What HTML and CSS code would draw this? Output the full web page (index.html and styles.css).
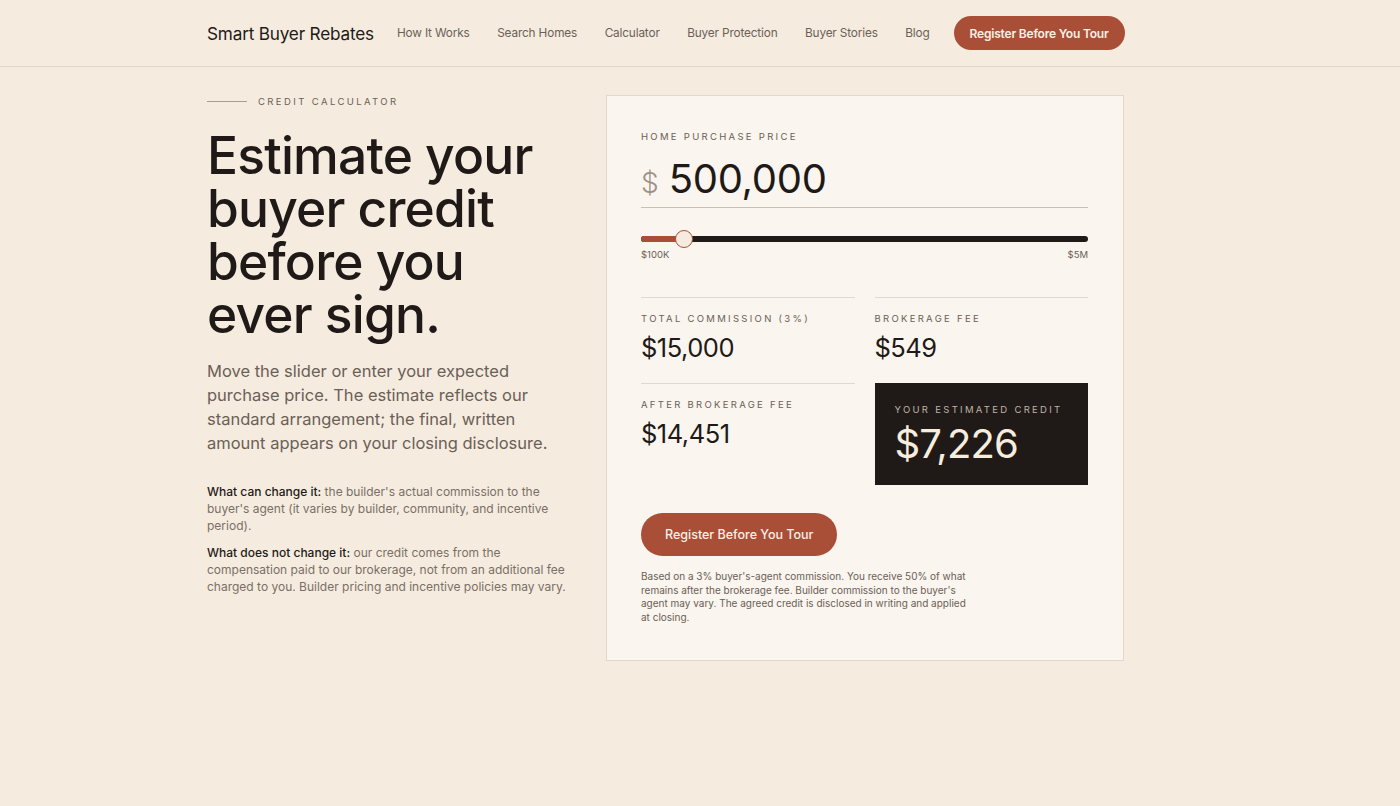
FILE: index.html
```html
<!DOCTYPE html>
<html lang="en">
<head>
<meta charset="utf-8">
<title>Credit Calculator · Smart Buyer Rebates</title>
<link rel="stylesheet" href="styles.css">
</head>
<body>
<header class="site-header">
  <div class="wrap header-row">
    <a class="logo" href="#">Smart Buyer Rebates</a>
    <nav class="nav">
      <a href="#">How It Works</a>
      <a href="#">Search Homes</a>
      <a href="#">Calculator</a>
      <a href="#">Buyer Protection</a>
      <a href="#">Buyer Stories</a>
      <a href="#">Blog</a>
    </nav>
    <a class="btn btn-sm" href="#">Register Before You Tour</a>
  </div>
</header>

<main class="wrap main-row">
  <section class="intro">
    <div class="eyebrow"><span class="eyebrow-line"></span>Credit Calculator</div>
    <h1 class="headline">Estimate your buyer credit before you ever sign.</h1>
    <p class="lead">Move the slider or enter your expected purchase price. The estimate reflects our standard arrangement; the final, written amount appears on your closing disclosure.</p>
    <p class="note"><strong>What can change it:</strong> the builder's actual commission to the buyer's agent (it varies by builder, community, and incentive period).</p>
    <p class="note"><strong>What does not change it:</strong> our credit comes from the compensation paid to our brokerage, not from an additional fee charged to you. Builder pricing and incentive policies may vary.</p>
  </section>

  <section class="card">
    <div class="label">Home Purchase Price</div>
    <div class="price-field">
      <span class="currency">$</span>
      <span class="price">500,000</span>
    </div>
    <div class="slider">
      <div class="track">
        <div class="fill" style="width: 9.6%"></div>
        <div class="thumb" style="left: 9.6%"></div>
      </div>
      <div class="slider-labels"><span>$100K</span><span>$5M</span></div>
    </div>

    <div class="stats">
      <div class="stat">
        <div class="label">Total Commission (3%)</div>
        <div class="stat-value">$15,000</div>
      </div>
      <div class="stat">
        <div class="label">Brokerage Fee</div>
        <div class="stat-value">$549</div>
      </div>
      <div class="stat">
        <div class="label">After Brokerage Fee</div>
        <div class="stat-value">$14,451</div>
      </div>
      <div class="stat stat-credit">
        <div class="label">Your Estimated Credit</div>
        <div class="credit-value">$7,226</div>
      </div>
    </div>

    <a class="btn btn-lg" href="#">Register Before You Tour</a>
    <p class="fineprint">Based on a 3% buyer's-agent commission. You receive 50% of what remains after the brokerage fee. Builder commission to the buyer's agent may vary. The agreed credit is disclosed in writing and applied at closing.</p>
  </section>
</main>
</body>
</html>
```

FILE: styles.css
```css
* { box-sizing: border-box; }

html, body {
  margin: 0;
  background: #f5ecdf;
  color: #1f1a17;
  font-family: Inter, "Noto Sans", "Liberation Sans", sans-serif;
}

a { text-decoration: none; color: inherit; }

.wrap {
  width: 986px;
  margin: 0 auto;
}

/* Header */
.site-header {
  border-bottom: 1px solid #e2d8ca;
}
.header-row {
  height: 66px;
  display: flex;
  align-items: center;
  white-space: nowrap;
}
.logo {
  font-size: 17.2px;
  letter-spacing: -0.2px;
  color: #1f1a17;
  margin-right: 23px;
}
.nav {
  display: flex;
  gap: 27.5px;
}
.nav a {
  font-size: 11.8px;
  letter-spacing: -0.15px;
  color: #6b6057;
}
.btn {
  display: inline-flex;
  align-items: center;
  justify-content: center;
  background: #a94f37;
  color: #fbefe4;
  font-weight: 600;
  border-radius: 999px;
  white-space: nowrap;
}
.btn-sm {
  height: 34px;
  padding: 0 16px;
  margin-left: 24px;
  font-size: 12px;
  letter-spacing: -0.2px;
}

/* Main */
.main-row {
  display: grid;
  grid-template-columns: 360px 518px;
  column-gap: 39px;
  align-items: start;
  padding-top: 27px;
}
.eyebrow {
  display: flex;
  align-items: center;
  font-size: 9.5px;
  letter-spacing: 2.4px;
  text-transform: uppercase;
  color: #6b6057;
  height: 14px;
}
.eyebrow-line {
  width: 40px;
  height: 1px;
  background: #a99d90;
  margin-right: 11px;
}
.headline {
  margin: 21px 0 0;
  font-size: 51.5px;
  line-height: 53px;
  font-weight: 500;
  letter-spacing: -0.8px;
  color: #1f1a17;
}
.lead {
  margin: 18px 0 0;
  font-size: 16.5px;
  line-height: 24px;
  color: #6b6057;
}
.note {
  margin: 28px 0 0;
  font-size: 12px;
  line-height: 17px;
  color: #7a6f66;
}
.note + .note { margin-top: 10px; }
.note strong {
  font-weight: 500;
  color: #1f1a17;
}

/* Calculator card */
.card {
  margin-top: 1px;
  background: #faf5ee;
  border: 1px solid #e3d8ca;
  padding: 35px 35px 35px 34px;
}
.label {
  font-size: 9.5px;
  letter-spacing: 2.3px;
  text-transform: uppercase;
  color: #6b6057;
  line-height: 12px;
}
.price-field {
  display: flex;
  align-items: baseline;
  border-bottom: 1px solid #c9bfb4;
  padding: 10px 0 4px;
  margin-top: 2px;
}
.currency {
  font-size: 28px;
  color: #9c9289;
  margin-right: 10px;
  font-weight: 300;
}
.price {
  font-size: 40px;
  line-height: 48px;
  color: #1f1a17;
  letter-spacing: -0.3px;
}
.slider {
  margin-top: 28px;
}
.track {
  position: relative;
  height: 6px;
  border-radius: 3px;
  background: #1f1a17;
}
.fill {
  position: absolute;
  left: 0;
  top: 0;
  bottom: 0;
  background: #a94f37;
  border-radius: 3px 0 0 3px;
}
.thumb {
  position: absolute;
  top: 50%;
  width: 18px;
  height: 18px;
  margin: -9px 0 0 -9px;
  border-radius: 50%;
  background: #f6ebdf;
  border: 1.5px solid #a94f37;
}
.slider-labels {
  display: flex;
  justify-content: space-between;
  font-size: 9.5px;
  color: #6b6057;
  margin-top: 7px;
}

.stats {
  display: grid;
  grid-template-columns: 1fr 1fr;
  column-gap: 20px;
  margin-top: 37px;
}
.stat {
  border-top: 1px solid #e2d8cb;
  padding: 15px 0 14px;
  height: 86px;
}
.stat-value {
  font-size: 25.5px;
  margin-top: 7px;
  letter-spacing: -0.5px;
  color: #1f1a17;
}
.stat-credit {
  background: #1f1a17;
  border-top: none;
  padding: 21px 20px 0;
  height: 102px;
}
.stat-credit .label {
  color: #bfb4a8;
}
.credit-value {
  font-size: 40px;
  margin-top: 3px;
  letter-spacing: -0.8px;
  color: #f7eddf;
}

.btn-lg {
  margin-top: 28px;
  height: 43px;
  padding: 0 24px;
  font-size: 12.5px;
  font-weight: 500;
}
.fineprint {
  margin: 14px 0 0;
  width: 335px;
  font-size: 10px;
  line-height: 13.7px;
  color: #6b6057;
}
```
